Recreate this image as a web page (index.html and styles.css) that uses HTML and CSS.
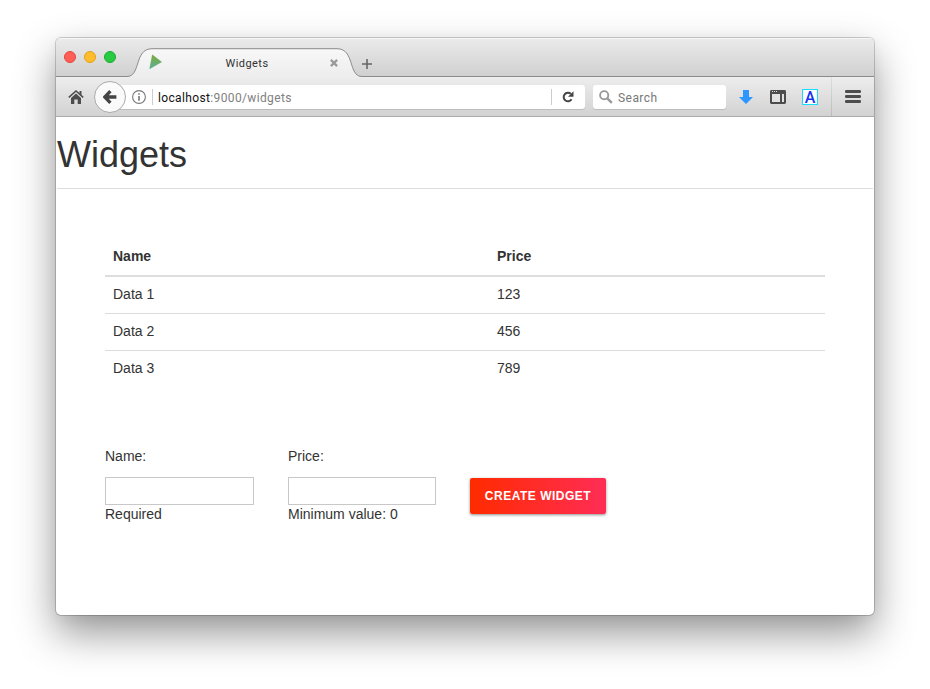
FILE: index.html
```html
<!DOCTYPE html>
<html lang="en">
<head>
<meta charset="utf-8">
<title>Widgets</title>
<link rel="stylesheet" href="styles.css">
</head>
<body>
<div class="window">
  <header class="tabbar">
    <div class="lights"><i class="close"></i><i class="min"></i><i class="max"></i></div>
    <div class="tab">
      <svg class="tab-shape" width="236" height="29" viewBox="0 0 236 29">
        <defs><linearGradient id="tg" x1="0" y1="0" x2="0" y2="1"><stop offset="0" stop-color="#f8f8f8"/><stop offset="1" stop-color="#ededed"/></linearGradient></defs>
        <path d="M0 28.5C14 28.5 7 .7 25 .7H210C228 .7 221 28.5 235 28.5V29H0Z" fill="url(#tg)"/>
        <path d="M0 28.5C14 28.5 7 .7 25 .7H210C228 .7 221 28.5 235 28.5H236" fill="none" stroke="#8c8c8c"/>
      </svg>
      <svg class="favicon" width="14" height="16" viewBox="0 0 14 16"><defs><linearGradient id="fg" x1="0" y1="0" x2="0" y2="1"><stop offset="0" stop-color="#79ad35"/><stop offset="1" stop-color="#5fae9c"/></linearGradient></defs><path d="M3.2.5 13 8.1.3 15.3Z" fill="url(#fg)"/></svg>
      <span class="tab-title">Widgets</span>
      <svg class="tab-close" width="8" height="8" viewBox="0 0 8 8"><path d="M.9.9 7.1 7.1M7.1.9.9 7.1" stroke="#999" stroke-width="2.2"/></svg>
    </div>
    <svg class="plus" width="10" height="10" viewBox="0 0 10 10"><path d="M5 0V10M0 5H10" stroke="#666" stroke-width="1.6"/></svg>
  </header>
  <nav class="toolbar">
    <svg class="home" width="16" height="14" viewBox="0 0 16 14"><path d="M.8 7.4 8 1 15.2 7.4" fill="none" stroke="#4d4d4d" stroke-width="1.5"/><path d="M11.5 1H13.5V5L11.5 3.5ZM8 3.5 13 8V14H9.7V9.5H6.3V14H3V8Z" fill="#4d4d4d"/></svg>
    <div class="back"><svg width="14" height="14" viewBox="0 0 14 14"><path d="M7.4 1.2 1.8 7l5.6 5.8M2 7H13.4" fill="none" stroke="#444" stroke-width="3.3"/></svg></div>
    <div class="url">
      <svg class="info" width="14" height="14" viewBox="0 0 14 14"><circle cx="7" cy="7" r="6.4" fill="none" stroke="#777" stroke-width="1.1"/><path d="M7 6V10.7M7 3.2V4.8" stroke="#777" stroke-width="1.6"/></svg>
      <i class="sep"></i>
      <span class="address"><b>localhost</b>:9000/widgets</span>
      <i class="sep"></i>
      <svg class="reload" width="12" height="12" viewBox="0 0 12 12"><path d="M9.6 8.3A4.3 4.3 0 1 1 8.8 2.7" fill="none" stroke="#444" stroke-width="2"/><path d="M11.5.3V5.8H6Z" fill="#444"/></svg>
    </div>
    <div class="search"><svg width="14" height="14" viewBox="0 0 14 14"><circle cx="5.2" cy="5.2" r="4.1" fill="none" stroke="#999" stroke-width="1.9"/><path d="M8.3 8.3 12.8 12.8" stroke="#999" stroke-width="2.4"/></svg><span>Search</span></div>
    <svg class="download" width="14" height="14" viewBox="0 0 14 14"><path d="M4 0H10V7H14L7 14 0 7H4Z" fill="#2e96ff"/></svg>
    <svg class="sidebar" width="16" height="14" viewBox="0 0 16 14"><rect width="16" height="14" rx="1.4" fill="#4d4d4d"/><path d="M2 4H10V12H2ZM12 4H14V12H12Z" fill="#e2e2e2"/><path d="M2 1.5H3M4 1.5H5M6 1.5H7" stroke="#e2e2e2"/></svg>
    <span class="addon">A</span>
    <i class="divider"></i>
    <svg class="menu" width="16" height="13" viewBox="0 0 16 13"><path d="M1.3 1.5H14.7M1.3 6.5H14.7M1.3 11.5H14.7" stroke="#4d4d4d" stroke-width="2.8" stroke-linecap="round"/></svg>
  </nav>
  <main>
    <h1>Widgets</h1>
    <table>
      <thead><tr><th class="name">Name</th><th>Price</th></tr></thead>
      <tbody>
        <tr><td>Data 1</td><td>123</td></tr>
        <tr><td>Data 2</td><td>456</td></tr>
        <tr><td>Data 3</td><td>789</td></tr>
      </tbody>
    </table>
    <form>
      <div class="field"><label for="name">Name:</label><input id="name" type="text"><span>Required</span></div>
      <div class="field"><label for="price">Price:</label><input id="price" type="text"><span>Minimum value: 0</span></div>
      <button type="button">CREATE WIDGET</button>
    </form>
  </main>
</div>
</body>
</html>
```
FILE: styles.css
```css
* { box-sizing: border-box; }
body { margin: 0; height: 689px; padding: 38px 56px 0; background: #fff; overflow: hidden; font-family: "Liberation Sans", Arial, sans-serif; }
svg { display: block; flex: none; }
i { display: block; flex: none; }
.window { width: 818px; height: 577px; background: #fff; border-radius: 5px; overflow: hidden; box-shadow: 0 0 0 1px rgba(0,0,0,.18), 0 18px 40px rgba(0,0,0,.42), 0 4px 14px rgba(0,0,0,.04); }
.tabbar { height: 39px; display: flex; align-items: flex-end; background: linear-gradient(#ebebeb, #d0d0d0); border-bottom: 1px solid #8b8b8b; box-shadow: inset 0 1px #f6f6f6; }
.lights { display: flex; gap: 8px; width: 71px; padding: 0 0 13px 8px; }
.lights i { width: 12px; height: 12px; border-radius: 50%; border: 1px solid; }
.close { background: #ff5f57; border-color: #e2463f !important; }
.min { background: #ffbd2e; border-color: #e1a116 !important; }
.max { background: #28ca42; border-color: #18ac2c !important; }
.tab { position: relative; width: 236px; height: 29px; margin-bottom: -1px; display: flex; align-items: center; flex: none; }
.tab-shape { position: absolute; left: 0; top: 0; }
.favicon { position: relative; margin-left: 22px; margin-bottom: 1px; }
.tab-title { position: relative; width: 142px; margin: 2px 14px 0 13px; text-align: center; font: 11px Roboto, sans-serif; letter-spacing: .45px; color: #333; }
.tab-close { position: relative; margin-left: -2px; }
.plus { margin: 0 0 7px -1px; }
.toolbar { height: 40px; display: flex; align-items: center; background: linear-gradient(#ededed, #d2d2d2); border-bottom: 1px solid #acacac; }
.home { margin-left: 12px; }
.back { position: relative; flex: none; width: 32px; height: 32px; margin-left: 10px; border: 1px solid #aaa; border-radius: 50%; background: #fafafa; display: flex; align-items: center; justify-content: center; }
.back svg { margin-right: 1px; }
.url { width: 475px; height: 24px; margin-left: -16px; padding-left: 22px; background: #fff; border-radius: 0 3px 3px 0; box-shadow: 0 1px #bdbdbd; display: flex; align-items: center; }
.sep { width: 1px; height: 16px; background: #ccc; }
.info { margin-right: 6px; }
.address { flex: 1; padding: 2px 0 0 5px; font: 12px Roboto, sans-serif; letter-spacing: .36px; color: #808080; }
.address b { font-weight: 400; color: #111; }
.reload { margin: 0 11px 0 10px; }
.search { width: 133px; height: 24px; margin-left: 8px; padding-left: 6px; background: #fff; border-radius: 3px; box-shadow: 0 1px #bdbdbd; display: flex; align-items: center; gap: 5px; font: 12px Roboto, sans-serif; letter-spacing: .45px; color: #777; }
.search span { padding-top: 2px; }
.download { margin-left: 13px; }
.sidebar { margin-left: 17px; }
.addon { width: 16px; height: 16px; margin-left: 16px; border: 1px solid #18dcff; background: #fff; color: #1633ee; font: 500 16px/15px Roboto, sans-serif; text-align: center; }
.divider { width: 1px; height: 39px; margin-left: 13px; background: linear-gradient(#dedede, #bababa); }
.menu { margin-left: 13px; }
main { color: #333; font-size: 14px; line-height: 20px; }
h1 { height: 72px; margin: 0 1px; padding-top: 18px; border-bottom: 1px solid #ddd; font-size: 36px; font-weight: 400; line-height: 40px; }
table { width: 720px; margin: 50px 0 0 49px; border-collapse: separate; border-spacing: 0; table-layout: fixed; }
th, td { padding: 7px 8px 9px; height: 37px; text-align: left; vertical-align: top; border-bottom: 1px solid #ddd; }
th { height: 38px; border-bottom-width: 2px; }
.name { width: 384px; }
tr:last-child td { border-bottom: 0; }
thead tr:last-child th { border-bottom: 2px solid #ddd; }
form { display: flex; margin: 58px 0 0 49px; }
.field { width: 149px; margin-right: 34px; display: flex; flex-direction: column; }
.field + .field { width: 148px; }
.field label { margin-bottom: 11px; }
.field input { width: 100%; height: 28px; padding: 0 6px; border: 1px solid #c8c8c8; border-radius: 0; background: #fff; font: inherit; }
.field span { margin-top: -1px; }
button { width: 136px; height: 36px; margin: 32px 0 0; padding: 0; border: 0; border-radius: 2px; background: linear-gradient(90deg, #ff2b00, #ff2d55); box-shadow: 0 1px 3px rgba(0,0,0,.45); color: #fff; font: 700 12px "Liberation Sans", Arial, sans-serif; letter-spacing: .5px; }
```
